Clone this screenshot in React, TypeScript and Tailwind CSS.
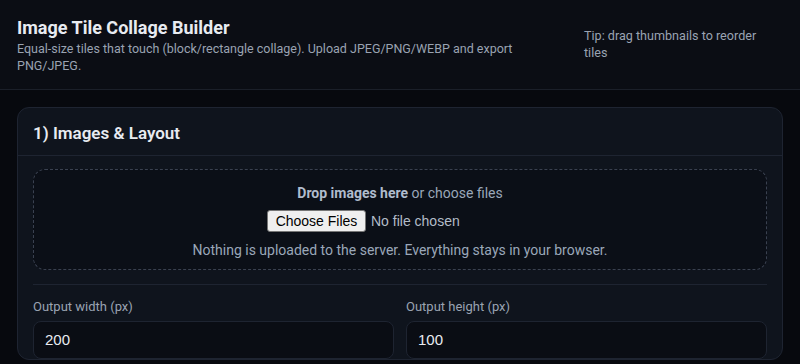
import React from "react";

const arial = { fontFamily: '"Liberation Sans", Arial, sans-serif' };

export default function App() {
  return (
    <div
      className="min-h-[364px] bg-[#07090e] text-[#e6e9ef]"
      style={{ fontFamily: 'Roboto, "Open Sans", sans-serif' }}
    >
      <header className="flex items-start border-b border-[#1b1f29] bg-[#0b0d14] px-[17px] pt-[16px] pb-[15px]">
        <div className="min-w-0 flex-1">
          <h1 className="text-[18px] font-bold leading-[24px] text-[#e8ebf1]">Image Tile Collage Builder</h1>
          <p className="w-[560px] text-[12.5px] leading-[17px] text-[#9aa3b2]">
            Equal-size tiles that touch (block/rectangle collage). Upload JPEG/PNG/WEBP and export PNG/JPEG.
          </p>
        </div>
        <p className="mt-[11px] mr-[14px] w-[185px] shrink-0 text-[12.6px] leading-[17px] text-[#9aa3b2]">
          Tip: drag thumbnails to reorder tiles
        </p>
      </header>
      <main className="px-[17px] pt-[17px]">
        <section className="rounded-[12px] border border-[#1e2431] bg-[#0f141d]">
          <div className="border-b border-[#1e2431] px-[15px] pt-[13px] pb-[10px]">
            <h2 className="text-[17px] font-semibold leading-[24px] text-[#e8ebf1]">1) Images &amp; Layout</h2>
          </div>
          <div className="px-[15px] pt-[13px]">
            <div className="flex flex-col items-center rounded-[12px] border border-dashed border-[#3a4150] bg-[#0b0f17] pt-[13px] pb-[9px] text-[14px]">
              <div className="leading-[20px] text-[#9aa7b9]">
                <b className="font-bold text-[#b0bccd]">Drop images here</b> or choose files
              </div>
              <div className="mt-[7px] flex w-[266px] items-center gap-[5px]">
                <span
                  className="inline-flex h-[22px] w-[99px] items-center justify-center rounded-[3px] border border-[#767676] bg-[#efefef] text-[14px] text-black"
                  style={arial}
                >
                  Choose Files
                </span>
                <span className="text-[14px] text-[#b3bcc8]" style={arial}>
                  No file chosen
                </span>
              </div>
              <div className="mt-[8px] leading-[20px] text-[#9aa7b9]">
                Nothing is uploaded to the server. Everything stays in your browser.
              </div>
            </div>
            <div className="mt-[14px] border-t border-[#1e2431]" />
            <div className="grid grid-cols-2 gap-[12px] pt-[13px]">
              <label className="flex flex-col">
                <span className="text-[13px] leading-[18px] text-[#9aa3b2]">Output width (px)</span>
                <div
                  className="mt-[5px] flex h-[38px] items-center rounded-[8px] border border-[#1e2431] bg-[#0a0d14] px-[11px] text-[15px] text-[#e8ebf1]"
                  style={arial}
                >
                  200
                </div>
              </label>
              <label className="flex flex-col">
                <span className="text-[13px] leading-[18px] text-[#9aa3b2]">Output height (px)</span>
                <div
                  className="mt-[5px] flex h-[38px] items-center rounded-[8px] border border-[#1e2431] bg-[#0a0d14] px-[11px] text-[15px] text-[#e8ebf1]"
                  style={arial}
                >
                  100
                </div>
              </label>
            </div>
          </div>
        </section>
      </main>
    </div>
  );
}
